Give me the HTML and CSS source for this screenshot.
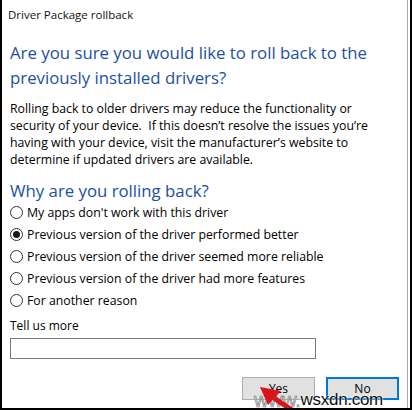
FILE: index.html
```html
<!DOCTYPE html>
<html lang="en">
<head>
    <meta charset="UTF-8">
    <title>Driver Package rollback</title>
    <link rel="stylesheet" href="styles.css">
</head>
<body>
    <div class="dialog">
        <div class="titlebar">Driver Package rollback</div>

        <div class="content">
            <h1 class="instruction">Are you sure you would like to roll back to the previously installed drivers?</h1>

            <p class="info">Rolling back to older drivers may reduce the functionality or<br>
                security of your device.&nbsp; If this doesn’t resolve the issues you’re<br>
                having with your device, visit the manufacturer’s website to<br>
                determine if updated drivers are available.</p>

            <h2 class="instruction why">Why are you rolling back?</h2>

            <div class="reasons">
                <label class="reason"><span class="radio"></span>My apps don't work with this driver</label>
                <label class="reason"><span class="radio checked"></span>Previous version of the driver performed better</label>
                <label class="reason"><span class="radio"></span>Previous version of the driver seemed more reliable</label>
                <label class="reason"><span class="radio"></span>Previous version of the driver had more features</label>
                <label class="reason"><span class="radio"></span>For another reason</label>
            </div>

            <div class="more-label">Tell us more</div>
            <div class="textbox"></div>

            <div class="buttons">
                <span class="btn">Yes</span>
                <span class="btn default">No</span>
            </div>
        </div>

        <div class="watermark">
            <svg class="arrow" width="48" height="34" viewBox="0 0 48 34">
                <path d="M46 34 L18 15" stroke="#d8141c" stroke-width="5" fill="none"/>
                <path d="M4 4 L25 8 L12 22 Z" fill="#d8141c"/>
            </svg>
            <span class="www">www.</span><span class="site">wsxdn.com</span>
        </div>
    </div>
</body>
</html>
```

FILE: styles.css
```css
html, body {
    margin: 0;
    padding: 0;
    background: #fff;
}

.dialog {
    position: relative;
    width: 412px;
    height: 410px;
    box-sizing: border-box;
    border-left: 2px solid #000;
    border-right: 2px solid #000;
    border-bottom: 2px solid #000;
    box-shadow: inset -2px 0 0 #fff, inset -3px 0 0 #a8a8a8;
    font-family: "Open Sans", "Noto Sans", sans-serif;
    color: #000;
    overflow: hidden;
}

.titlebar {
    height: 24px;
    padding: 8px 0 0 6px;
    box-sizing: border-box;
    font-size: 11.5px;
    line-height: 14px;
    color: #111;
}

.content {
    padding: 0 8px;
}

.instruction {
    margin: 16px 0 0;
    font-size: 16.8px;
    line-height: 25px;
    font-weight: normal;
    color: #22509f;
}

.info {
    margin: 10px 0 0;
    font-size: 12.3px;
    line-height: 17px;
    white-space: nowrap;
}

.why {
    margin-top: 13px;
    line-height: 20px;
}

.reasons {
    display: flex;
    flex-direction: column;
}

.reason {
    display: flex;
    align-items: center;
    height: 22px;
    font-size: 12.3px;
}

.radio {
    box-sizing: border-box;
    width: 13px;
    height: 13px;
    margin-right: 4px;
    border: 1px solid #333;
    border-radius: 50%;
    display: flex;
    align-items: center;
    justify-content: center;
}

.radio.checked::before {
    content: "";
    width: 7px;
    height: 7px;
    border-radius: 50%;
    background: #1a1a1a;
}

.more-label {
    margin-top: 7px;
    font-size: 12px;
    line-height: 16px;
}

.textbox {
    margin-top: 4px;
    width: 306px;
    height: 21px;
    box-sizing: border-box;
    border: 1px solid #7a7a7a;
}

.buttons {
    display: flex;
    justify-content: flex-end;
    gap: 11px;
    margin-top: 18px;
    padding-right: 3px;
}

.btn {
    width: 73px;
    height: 23px;
    box-sizing: border-box;
    display: flex;
    align-items: center;
    justify-content: center;
    font-size: 12px;
    background: #e1e1e1;
    border: 1px solid #adadad;
}

.btn.default {
    border: 2px solid #0078d7;
}

.watermark {
    position: absolute;
    left: 250px;
    bottom: -3px;
    height: 22px;
    display: flex;
    align-items: center;
    font-family: "Liberation Sans", sans-serif;
    font-size: 17px;
    letter-spacing: -0.3px;
}

.watermark .arrow {
    position: absolute;
    left: 4px;
    top: -6px;
}

.watermark .www {
    color: #d4d4d4;
    -webkit-text-stroke: 0.6px #777;
    font-size: 20px;
    margin-left: 2px;
}

.watermark .site {
    color: #111;
    text-shadow: 0 0 2px #fff, 0 0 2px #fff;
}
```
